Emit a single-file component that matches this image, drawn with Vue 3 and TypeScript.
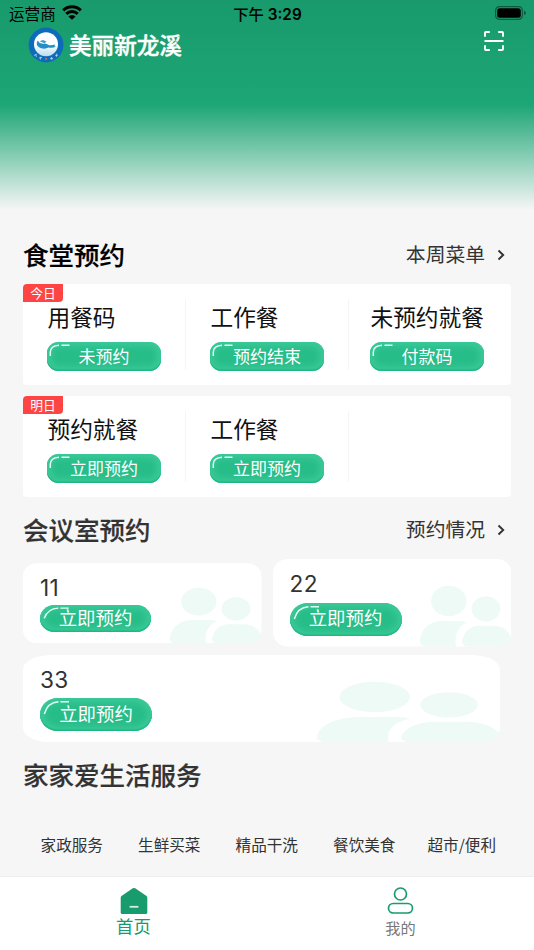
<script setup lang="ts">
interface Meal { name: string; action: string }
interface MealDay { tag: string; meals: Meal[] }
interface Room { name: string; size: string }

const days: MealDay[] = [
  {
    tag: '今日',
    meals: [
      { name: '用餐码', action: '未预约' },
      { name: '工作餐', action: '预约结束' },
      { name: '未预约就餐', action: '付款码' },
    ],
  },
  {
    tag: '明日',
    meals: [
      { name: '预约就餐', action: '立即预约' },
      { name: '工作餐', action: '立即预约' },
    ],
  },
]

const rooms: Room[] = [
  { name: '11', size: 'short' },
  { name: '22', size: 'tall' },
  { name: '33', size: 'wide' },
]

const services: string[] = ['家政服务', '生鲜买菜', '精品干洗', '餐饮美食', '超市/便利']
</script>

<template>
  <div class="page">
    <div class="status">
      <div class="carrier">
        <span>运营商</span>
        <svg class="wifi" viewBox="0 0 20 15">
          <path d="M1.200 5.400A12.600 12.600 0 0 1 18.800 5.400" />
          <path d="M4.300 8.900A8.200 8.200 0 0 1 15.700 8.900" />
          <path class="dot" d="M10 14.800L6.400 11.600A4.800 4.800 0 0 1 13.600 11.600Z" />
        </svg>
      </div>
      <div class="clock"><span class="noon">下午</span> 3:29</div>
      <svg class="battery" viewBox="0 0 31 14">
        <rect class="shell" x=".6" y=".6" width="26.800" height="12.800" rx="4" />
        <rect x="2.200" y="2.200" width="23.600" height="9.600" rx="2.500" />
        <path class="cap" d="M29 4.800q2 .7 2 2.200t-2 2.200z" />
      </svg>
    </div>

    <header class="header">
      <svg class="logo" viewBox="0 0 36 36">
        <defs>
          <linearGradient id="water" x1="0" y1="0" x2="0" y2="1">
            <stop offset=".5" stop-color="#fff" />
            <stop offset="1" stop-color="#b9dcf0" />
          </linearGradient>
        </defs>
        <circle cx="18" cy="18" r="17.400" fill="#0d6bb9" />
        <circle cx="18" cy="17.300" r="12" fill="url(#water)" />
        <path d="M10 13.500Q10.500 15.500 12.500 16.200Q15 17 17 16.400Q19.500 17.200 21 18.200Q24 18.600 27 17.600L26.500 19.200L28 19.600Q25 21.400 20.500 20.600Q17 22.600 12.500 21Q8.300 19.300 8.800 16Q9 14.300 10 13.500Z" fill="#248fc5" />
        <path d="M11.500 14.200L15 13L18.500 14.500L16.500 16.200Z" fill="#3e9ecb" />
        <g fill="none" stroke="#b8d8ee" stroke-width=".8">
          <path d="M6 28.500l2.700-1.200M7.600 27l.8 3M11 31l3-.7M12.800 29.800l-.4 2.800M22 31.800l3-.6M23.300 30l.7 3M27.200 28.400l2.800-.2M28.700 26.700l-.3 3.200" />
        </g>
        <path d="M17 31.500l1.500-.6 1 1.300-1.800.8z" fill="#d97562" />
      </svg>
      <h1>美丽新龙溪</h1>
      <svg class="scan" viewBox="0 0 20 20">
        <path d="M1 5.800V2Q1 1 2 1H5.800M14.200 1H18Q19 1 19 2V5.800M19 14.200V18Q19 19 18 19H14.200M5.800 19H2Q1 19 1 18V14.200M.5 10H19.500" />
      </svg>
    </header>

    <main class="content">
      <div class="heading first">
        <h2>食堂预约</h2>
        <a class="more">本周菜单
          <svg viewBox="0 0 8 12"><path d="M1.500 1.500L6.200 6L1.500 10.500" /></svg>
        </a>
      </div>

      <section v-for="day in days" :key="day.tag" class="day">
        <span class="tag">{{ day.tag }}</span>
        <div v-for="meal in day.meals" :key="meal.name" class="meal">
          <div class="meal-body">
            <div class="meal-name">{{ meal.name }}</div>
            <button class="book">
              <svg viewBox="0 0 114 29"><path d="M3.300 14V10.500Q3.300 3.600 12 3.200M14.500 3.200H22.500" /></svg>
              <span>{{ meal.action }}</span>
            </button>
          </div>
        </div>
      </section>

      <div class="heading second">
        <h2>会议室预约</h2>
        <a class="more">预约情况
          <svg viewBox="0 0 8 12"><path d="M1.500 1.500L6.200 6L1.500 10.500" /></svg>
        </a>
      </div>

      <div class="rooms">
        <article v-for="room in rooms" :key="room.name" class="room" :class="room.size">
          <svg class="room-bg" viewBox="0 0 238.500 87.500" preserveAspectRatio="none">
            <rect width="238.500" height="87.500" rx="15" ry="14" fill="#fff" />
            <g fill="#edfaf6">
              <ellipse cx="175.800" cy="42" rx="17.600" ry="15.200" />
              <ellipse cx="213" cy="49.800" rx="14.400" ry="12.600" />
              <path d="M147 82C147.700 71 156 62 169 62H184Q190 62 193.800 63.400C185 67 181 76 183 87.500H152Q147 86.500 147 82Z" />
              <path d="M189 82C191 73 197 66.700 206 66.700H221C230 66.700 237 73 238.200 80Q234 87.500 225 87.500H194Q189 86.500 189 82Z" />
            </g>
          </svg>
          <div class="room-body">
            <div class="room-name">{{ room.name }}</div>
            <button class="book pill">
              <svg viewBox="0 0 112 33" preserveAspectRatio="none">
                <path d="M4.300 16Q7.500 4.300 18.500 3.700M20.500 3.700H29" />
              </svg>
              <span>立即预约</span>
            </button>
          </div>
        </article>
      </div>

      <div class="heading third"><h2>家家爱生活服务</h2></div>
      <div class="services">
        <span v-for="service in services" :key="service">{{ service }}</span>
      </div>
    </main>

    <nav class="tabs">
      <a class="tab active">
        <svg viewBox="0 0 28 28">
          <path d="M12.800 1.300Q14 .5 15.200 1.300L26.500 9Q27.300 9.700 27.300 11V25.500Q27.300 27 25.800 27H2.200Q.7 27 .7 25.500V11Q.7 9.700 1.500 9Z" fill="#189b6d" />
          <path d="M9.600 19.800H18.400" stroke="#d5eee5" stroke-width="1.800" />
        </svg>
        <span>首页</span>
      </a>
      <a class="tab">
        <svg viewBox="0 0 28 28" fill="none" stroke="#189b6d" stroke-width="1.700">
          <circle cx="13.500" cy="7" r="6" />
          <rect x="1.500" y="16.500" width="24" height="9.500" rx="4.700" />
        </svg>
        <span>我的</span>
      </a>
    </nav>
  </div>
</template>

<style>
body { background: #f6f6f6; }
</style>

<style scoped>
.page {
  box-sizing: border-box;
  width: 534px;
  height: 950px;
  overflow: hidden;
  display: flex;
  flex-direction: column;
  font-family: "Noto Sans CJK SC", sans-serif;
  color: #333;
  background: linear-gradient(180deg, #189a6c 0, #1da676 105px, #f6f6f6 210px);
}
h1, h2 { margin: 0; font-weight: 500; white-space: nowrap; }
svg { display: block; flex: none; }

.status {
  display: grid;
  grid-template-columns: 1fr auto 1fr;
  align-items: center;
  height: 27px;
  padding: 0 8px 0 9px;
  color: #000;
  font-size: 15.600px;
  line-height: 25px;
}
.carrier { display: flex; align-items: center; gap: 6px; }
.wifi { width: 20px; height: 15px; margin-top: -2px; fill: none; stroke: #000; stroke-width: 3; }
.wifi .dot { fill: #000; stroke: none; }
.clock { font-family: Inter, "Noto Sans CJK SC", sans-serif; font-weight: 600; font-size: 15.300px; white-space: nowrap; }
.noon { font-family: "Noto Sans CJK SC", sans-serif; font-weight: 500; }
.battery { width: 31px; height: 14px; margin-top: -1px; justify-self: end; }
.battery .shell { fill: none; stroke: #0c5b40; stroke-width: 1.200; }
.battery .cap { fill: #0c5b40; }

.header { display: flex; align-items: center; height: 36px; padding: 0 30px 0 28px; }
.logo { width: 36px; height: 36px; }
.header h1 { margin-left: 5px; flex: 1; color: #fff; font-size: 22.600px; line-height: 36px; font-weight: 500; -webkit-text-stroke: .4px currentColor; }
.scan { width: 20px; height: 20px; margin-bottom: 9px; fill: none; stroke: #fff; stroke-width: 1.900; }

.content { flex: 1; padding: 171px 23px 0; }
.heading { display: flex; align-items: center; justify-content: space-between; height: 40px; }
.heading h2 { font-size: 25.500px; line-height: 40px; -webkit-text-stroke: .2px currentColor; }
.heading.first h2 { color: #000; }
.more { display: flex; align-items: center; gap: 12px; padding-right: 6px; font-size: 19.800px; line-height: 40px; }
.more svg { width: 8px; height: 12px; margin-top: 1px; fill: none; stroke: #333; stroke-width: 1.900; }

.day {
  position: relative;
  display: grid;
  grid-template-columns: 163px 163px 162px;
  height: 101px;
  margin-top: 10px;
  background: #fff;
  border-radius: 4px;
}
.day + .day { margin-top: 11px; }
.tag {
  position: absolute;
  top: 0;
  left: 0;
  width: 40px;
  height: 18px;
  border-radius: 4px 0 4px 0;
  background: #ff4544;
  color: #fff;
  font-size: 12.800px;
  line-height: 18px;
  text-align: center;
}
.meal {
  display: flex;
  justify-content: center;
  height: 71px;
  margin-top: 15px;
  border-right: 1px solid #f5f5f5;
}
.meal:last-child:nth-child(4) { border-right: 0; padding-right: 6px; }
.meal-body { width: 114px; }
.meal-name { height: 40px; margin: 3px 0 0 .5px; color: #111; font-size: 22.700px; line-height: 30px; white-space: nowrap; }

.book {
  position: relative;
  display: block;
  width: 114px;
  height: 29px;
  margin: 0;
  padding: 0 0 2px;
  border: 0;
  border-radius: 12px / 11px;
  background: #27bd89;
  box-shadow: inset 0 -1.500px 1px #20b783, inset 0 0 7px 4px #3cca99;
  color: #fff;
  font-family: inherit;
  font-size: 17px;
  line-height: 25px;
  text-align: center;
}
.book svg { position: absolute; inset: 0; width: 100%; height: 100%; fill: none; stroke: #e2fff5; stroke-width: 1.500; }
.book span { position: relative; }

.heading.second { margin-top: 12px; }
.rooms { display: grid; grid-template-columns: 238.500px 238.500px; column-gap: 11px; row-gap: 8px; align-items: center; margin-top: 10px; }
.room { position: relative; height: 87.500px; }
.room.short { height: 80.500px; }
.room.wide { width: 477px; }
.room-bg { position: absolute; inset: 0; width: 100%; height: 100%; }
.room-body { position: relative; padding: 10px 0 0 17px; }
.room-name { height: 33.500px; font-family: Inter, sans-serif; font-size: 22.600px; line-height: 29px; letter-spacing: .4px; }
.pill { width: 112px; height: 33px; padding-bottom: 4px; border-radius: 18px / 16.500px; font-size: 18.400px; line-height: 28px; }
.short .room-name { height: 32px; }
.short .pill { width: 111px; height: 27.500px; padding-bottom: 2px; line-height: 25px; }

.heading.third { margin-top: 12px; }
.services { display: grid; grid-template-columns: repeat(5, 97.500px); margin-top: 38px; font-size: 15.600px; line-height: 24px; text-align: center; }

.tabs { display: grid; grid-template-columns: 1fr 1fr; height: 73px; border-top: 1px solid #eee; background: #fff; }
.tab { display: flex; flex-direction: column; align-items: center; padding-top: 10px; color: #777; font-size: 15.200px; line-height: 25px; }
.tab svg { width: 28px; height: 28px; }
.tab.active { color: #189b6d; font-size: 17.400px; line-height: 22px; }
</style>
